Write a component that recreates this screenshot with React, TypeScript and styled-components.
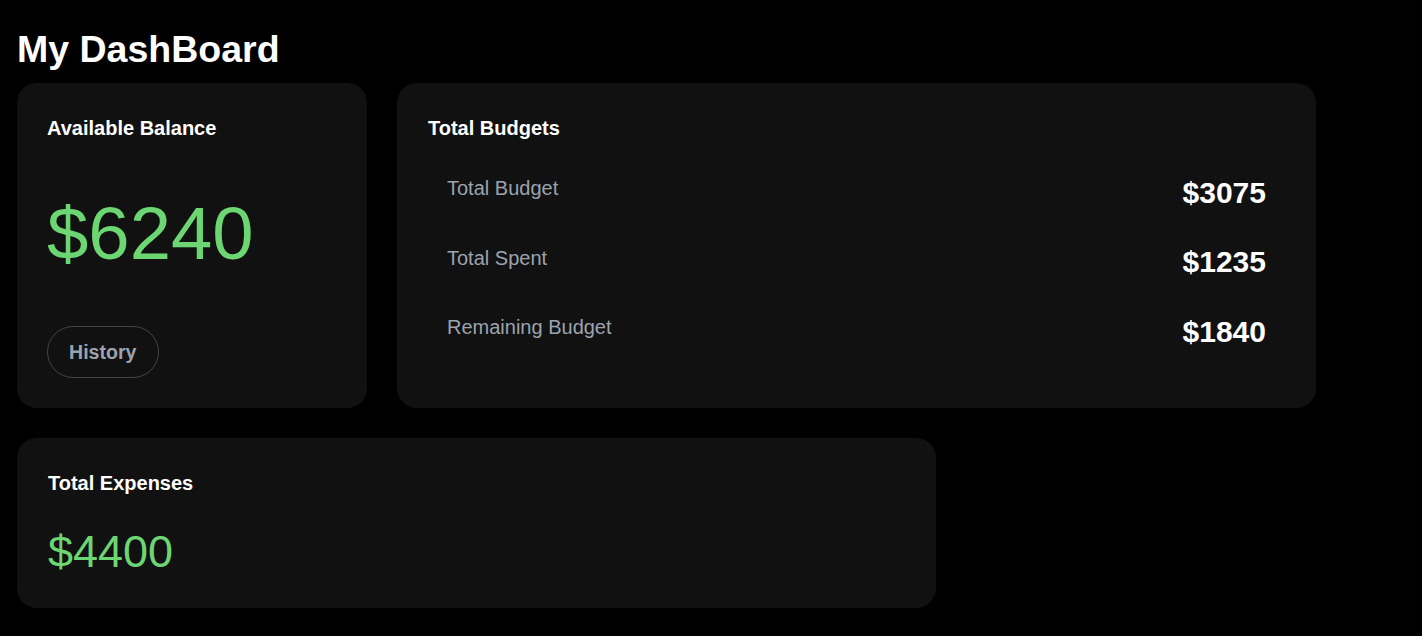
import React from "react";
import styled, { createGlobalStyle } from "styled-components";

const GlobalStyle = createGlobalStyle`
  html, body {
    margin: 0;
    padding: 0;
    background: #000000;
  }
  body {
    font-family: "Liberation Sans", Arial, sans-serif;
    color: #ffffff;
  }
  * { box-sizing: border-box; }
`;

const Page = styled.main`
  min-height: 636px;
  padding: 26px 17px 28px 17px;
  background: #000000;
`;

const PageTitle = styled.h1`
  margin: 2px 0 12px 0;
  font-size: 37.5px;
  font-weight: 700;
  color: #ffffff;
`;

const TopRow = styled.div`
  display: flex;
  gap: 30px;
  align-items: stretch;
`;

const Card = styled.section<{ $width: number; $padLeft?: number }>`
  width: ${(p) => p.$width}px;
  background: #111111;
  border-radius: 20px;
  padding: 34px 30px 30px ${(p) => p.$padLeft ?? 30}px;
  display: flex;
  flex-direction: column;
`;

const CardTitle = styled.h3`
  margin: 0;
  font-size: 20px;
  font-weight: 700;
  color: #ffffff;
`;

const Amount = styled.div<{ $size: number; $gapTop: number; $gapBottom: number }>`
  font-size: ${(p) => p.$size}px;
  color: #6cd672;
  margin: ${(p) => p.$gapTop}px 0 ${(p) => p.$gapBottom}px 0;
`;

const HistoryButton = styled.button`
  align-self: flex-start;
  height: 52px;
  padding: 0 21px;
  background: transparent;
  border: 1px solid #444444;
  border-radius: 26px;
  color: #9ca3af;
  font-family: "Liberation Sans", Arial, sans-serif;
  font-size: 19.6px;
  font-weight: 700;
  cursor: pointer;
`;

const BudgetList = styled.div`
  margin-top: 35.5px;
  display: flex;
  flex-direction: column;
  gap: 35.5px;
`;

const BudgetRow = styled.div`
  display: flex;
  justify-content: space-between;
  align-items: flex-start;
  padding: 0 20px 0 19px;
`;

const BudgetLabel = styled.span`
  font-size: 20px;
  color: #9ca3af;
  margin-top: 1.5px;
`;

const BudgetValue = styled.span`
  font-size: 30px;
  font-weight: 700;
  color: #ffffff;
`;

const BottomRow = styled.div`
  margin-top: 30px;
  display: flex;
`;

const budgets = [
  { label: "Total Budget", value: "$3075" },
  { label: "Total Spent", value: "$1235" },
  { label: "Remaining Budget", value: "$1840" },
];

export default function App() {
  return (
    <>
      <GlobalStyle />
      <Page>
        <PageTitle>My DashBoard</PageTitle>
        <TopRow>
          <Card $width={350}>
            <CardTitle>Available Balance</CardTitle>
            <Amount $size={74.3} $gapTop={51} $gapBottom={50}>
              $6240
            </Amount>
            <HistoryButton>History</HistoryButton>
          </Card>
          <Card $width={919} $padLeft={31}>
            <CardTitle>Total Budgets</CardTitle>
            <BudgetList>
              {budgets.map((b) => (
                <BudgetRow key={b.label}>
                  <BudgetLabel>{b.label}</BudgetLabel>
                  <BudgetValue>{b.value}</BudgetValue>
                </BudgetRow>
              ))}
            </BudgetList>
          </Card>
        </TopRow>
        <BottomRow>
          <Card $width={919} $padLeft={31}>
            <CardTitle>Total Expenses</CardTitle>
            <Amount $size={45} $gapTop={31} $gapBottom={0}>
              $4400
            </Amount>
          </Card>
        </BottomRow>
      </Page>
    </>
  );
}
